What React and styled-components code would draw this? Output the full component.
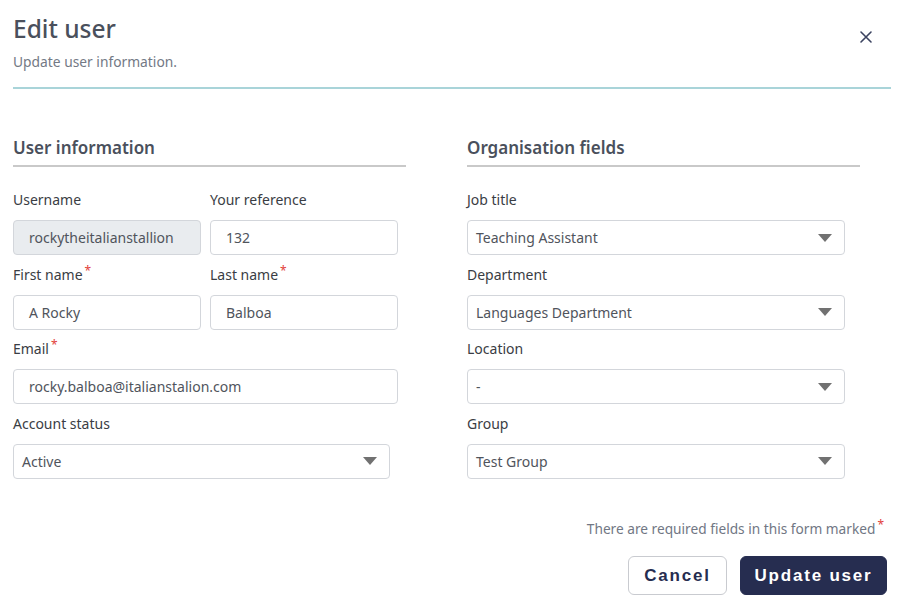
import React from "react";
import styled, { createGlobalStyle } from "styled-components";

const Global = createGlobalStyle`
  html, body { margin: 0; padding: 0; background: #fff; }
  body { font-family: "Noto Sans", "Open Sans", sans-serif; color: #3d4048; }
  * { box-sizing: border-box; }
`;

const Page = styled.div`
  width: 902px;
  height: 611px;
  padding: 13px 11px 0 13px;
  display: flex;
  flex-direction: column;
`;

const Header = styled.header`
  display: flex;
  justify-content: space-between;
  align-items: flex-start;
  padding-bottom: 15px;
  border-bottom: 2px solid #a9d4d9;
`;

const Title = styled.h1`
  margin: 0;
  font-size: 24.5px;
  line-height: 32px;
  font-weight: 500;
  color: #4a505c;
`;

const Subtitle = styled.p`
  margin: 7px 0 0;
  font-size: 13.8px;
  line-height: 20px;
  color: #737985;
`;

const Close = styled.button`
  border: none;
  background: none;
  padding: 0;
  margin: 17px 18px 0 0;
  width: 14px;
  height: 14px;
  color: #3b4360;
  display: flex;
  cursor: pointer;
`;

const Columns = styled.div`
  display: grid;
  grid-template-columns: 393px 393px;
  column-gap: 61px;
  margin-top: 47px;
`;

const Section = styled.section`
  display: flex;
  flex-direction: column;
`;

const SectionTitle = styled.h2`
  margin: 0 0 23px;
  font-size: 17px;
  line-height: 24px;
  font-weight: 600;
  color: #4a505c;
  padding-bottom: 5px;
  border-bottom: 2px solid #c9c9c9;
`;

const FieldGrid = styled.div`
  display: grid;
  grid-template-columns: ${(p) => p.$cols || "1fr"};
  column-gap: 9px;
  row-gap: 9.5px;
`;

const Field = styled.div`
  display: flex;
  flex-direction: column;
  grid-column: ${(p) => p.$span || "auto"};
  width: ${(p) => p.$width || "auto"};
`;

const Label = styled.label`
  display: block;
  height: 20px;
  font-size: 14px;
  line-height: 20px;
  color: #3a3d44;
  margin-bottom: 10px;
`;

const Req = styled.span`
  color: #e2403a;
  font-size: 12px;
  line-height: 0;
  vertical-align: 5px;
  margin-left: 2px;
`;

const Input = styled.div`
  height: 35px;
  border: 1px solid #d3d6db;
  border-radius: 4px;
  background: ${(p) => (p.$disabled ? "#e9ecef" : "#fff")};
  display: flex;
  align-items: center;
  padding: 0 ${(p) => (p.$select ? "12px" : "15px")} 0 ${(p) => (p.$select ? "8px" : "15px")};
  font-size: 14px;
  color: #50545c;
  justify-content: space-between;
`;

const Arrow = styled.span`
  width: 0;
  height: 0;
  border-left: 7px solid transparent;
  border-right: 7px solid transparent;
  border-top: 8px solid #717171;
`;

const Footer = styled.footer`
  margin-top: auto;
  display: flex;
  flex-direction: column;
  align-items: flex-end;
  padding: 0 4px 16px 0;
`;

const Note = styled.p`
  margin: 0 3px 0 0;
  font-size: 13.7px;
  line-height: 20px;
  color: #717784;
`;

const Buttons = styled.div`
  display: flex;
  gap: 13px;
  margin-top: 17px;
`;

const Button = styled.button`
  height: 39px;
  padding: 0;
  width: ${(p) => (p.$primary ? "147px" : "99px")};
  border-radius: 6px;
  border: 1px solid ${(p) => (p.$primary ? "#262d50" : "#c9cbd0")};
  background: ${(p) => (p.$primary ? "#262d50" : "#fff")};
  color: ${(p) => (p.$primary ? "#fff" : "#262d50")};
  font-family: "Liberation Sans", Arial, sans-serif;
  font-weight: 700;
  font-size: 17px;
  letter-spacing: 1.8px;
  cursor: pointer;
`;

const TextField = ({ label, value, required, disabled, span }) => (
  <Field $span={span}>
    <Label>
      {label}
      {required && <Req>*</Req>}
    </Label>
    <Input $disabled={disabled}>{value}</Input>
  </Field>
);

const SelectField = ({ label, value, width, span }) => (
  <Field $width={width} $span={span}>
    <Label>{label}</Label>
    <Input $select>
      <span>{value}</span>
      <Arrow />
    </Input>
  </Field>
);

export default function App() {
  return (
    <>
      <Global />
      <Page>
        <Header>
          <div>
            <Title>Edit user</Title>
            <Subtitle>Update user information.</Subtitle>
          </div>
          <Close aria-label="Close">
            <svg width="14" height="14" viewBox="0 0 14 14">
              <path d="M2 2 L12 12 M12 2 L2 12" stroke="currentColor" strokeWidth="1.6" strokeLinecap="round" />
            </svg>
          </Close>
        </Header>
        <Columns>
          <Section>
            <SectionTitle>User information</SectionTitle>
            <FieldGrid $cols="188px 188px">
              <TextField label="Username" value="rockytheitalianstallion" disabled />
              <TextField label="Your reference" value="132" />
              <TextField label="First name" value="A Rocky" required />
              <TextField label="Last name" value="Balboa" required />
              <TextField label="Email" value="rocky.balboa@italianstalion.com" required span="1 / 3" />
              <SelectField label="Account status" value="Active" span="1 / 3" width="377px" />
            </FieldGrid>
          </Section>
          <Section>
            <SectionTitle>Organisation fields</SectionTitle>
            <FieldGrid $cols="378px">
              <SelectField label="Job title" value="Teaching Assistant" />
              <SelectField label="Department" value="Languages Department" />
              <SelectField label="Location" value="-" />
              <SelectField label="Group" value="Test Group" />
            </FieldGrid>
          </Section>
        </Columns>
        <Footer>
          <Note>
            There are required fields in this form marked<Req>*</Req>
          </Note>
          <Buttons>
            <Button>Cancel</Button>
            <Button $primary>Update user</Button>
          </Buttons>
        </Footer>
      </Page>
    </>
  );
}
